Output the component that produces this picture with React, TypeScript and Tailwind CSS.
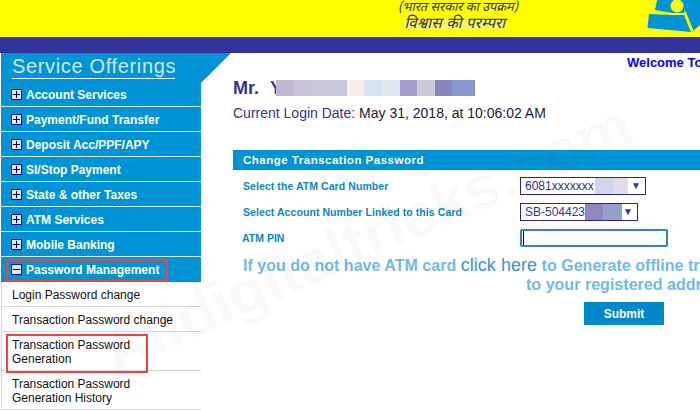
const font = { fontFamily: '"Liberation Sans", Arial, sans-serif' }

const menu = [
  'Account Services',
  'Payment/Fund Transfer',
  'Deposit Acc/PPF/APY',
  'SI/Stop Payment',
  'State & other Taxes',
  'ATM Services',
  'Mobile Banking',
]

const blurName = [
  ['w-[18px]', 'bg-[#c0b8d4]'],
  ['w-[17px]', 'bg-[#c8c2da]'],
  ['w-[36px]', 'bg-[#cac8de]'],
  ['w-[17px]', 'bg-[#f5eeea]'],
  ['w-[18px]', 'bg-[#d6e2f2]'],
  ['w-[18px]', 'bg-[#e0e6f0]'],
  ['w-[17px]', 'bg-[#a49ccc]'],
  ['w-[18px]', 'bg-[#cbc8dc]'],
  ['w-[17px]', 'bg-[#8a84bf]'],
  ['w-[23px]', 'bg-[#8898cc]'],
]

function ToggleIcon({ open = false }: { open?: boolean }) {
  return (
    <svg width="11" height="11" viewBox="0 0 11 11" className="shrink-0">
      <rect x="0.5" y="0.5" width="10" height="10" fill="#dfeaf8" stroke="#000080" />
      <path d={open ? 'M2 5.5H9' : 'M2 5.5H9M5.5 2V9'} stroke="#000080" fill="none" />
    </svg>
  )
}

function Logo() {
  return (
    <svg width="70" height="37" viewBox="0 0 70 37" className="shrink-0">
      <path d="M27 0L25 10L42 13H54L56 0Z" fill="#0093d6" />
      <path d="M52 0H70V25L62 32L55 12Z" fill="#0093d6" />
      <path d="M19 14L42 15H54L61 32L17.5 28Z" fill="#0093d6" />
      <circle cx="47" cy="6" r="6.5" fill="#ffff00" />
      <path d="M55 12L62.5 31" stroke="#ffff00" strokeWidth="2" fill="none" />
    </svg>
  )
}

export default function App() {
  return (
    <div className="relative w-[700px] h-[411px] overflow-hidden bg-white flex flex-col" style={font}>
      {/* top banner */}
      <div className="h-[37px] bg-[#ffff00] flex shrink-0 overflow-hidden">
        <div className="w-[397px] shrink-0" />
        <div className="w-[122px] shrink-0 flex flex-col items-center text-[#333] italic" style={{ fontFamily: '"Noto Sans Devanagari", "Noto Serif Devanagari", "Noto Sans", serif' }}>
          <div className="text-[12.7px] leading-[16px] whitespace-nowrap">(भारत सरकार का उपक्रम)</div>
          <div className="text-[15px] leading-[11px] mt-[3px] mr-[6px] bg-[#f4f46a] whitespace-nowrap tracking-[0.3px]">विश्वास की परम्परा</div>
        </div>
        <div className="flex-1" />
        <Logo />
      </div>
      <div className="h-[16px] bg-[#333399] shrink-0" />

      <div className="flex flex-1 min-h-0 pl-px">
        {/* left menu */}
        <aside className="relative w-[200px] shrink-0">
          <svg width="30" height="30" viewBox="0 0 30 30" className="absolute left-full top-0">
            <path d="M0 0H30L0 30Z" fill="#0093d6" />
          </svg>
          <div className="bg-[#0093d6] h-[29px] pl-[11px] pt-[2px]">
            <div className="w-[163px] border-b border-white text-[#cfeaf8] text-[20px] leading-[23px] tracking-[0.65px] whitespace-nowrap">
              Service Offerings
            </div>
          </div>
          {menu.map(m => (
            <div key={m} className="h-[25px] bg-[#0093d6] border-b border-[#d5ecf8] flex items-center gap-[4px] pl-[10px] text-white text-[12px] font-bold">
              <ToggleIcon />
              <span className="pt-[2px]">{m}</span>
            </div>
          ))}
          <div className="h-[25px] bg-[#0093d6] flex items-center gap-[4px] pl-[10px] text-white text-[12px] font-bold">
            <ToggleIcon open />
            <span className="pt-[1px]">Password Management</span>
          </div>
          <div className="border-l border-[#d8d8d8] text-[#111] text-[12px] leading-[14px]">
            <div className="h-[25px] pl-[10px] pt-[1px] flex items-center border-b border-[#d8d8d8]">Login Password change</div>
            <div className="h-[25px] pl-[10px] pt-[1px] flex items-center border-b border-[#d8d8d8]">Transaction Password change</div>
            <div className="h-[39px] pl-[10px] pt-[1px] flex items-center border-b border-[#d8d8d8]">Transaction Password<br />Generation</div>
            <div className="h-[39px] pl-[10px] pt-[1px] flex items-center border-b border-[#d8d8d8]">Transaction Password<br />Generation History</div>
          </div>
          {/* red highlight boxes */}
          <div className="absolute left-[5px] top-[206px] w-[162px] h-[23px] border-[2px] border-[#f54040]" />
          <div className="absolute left-[5px] top-[281px] w-[142px] h-[39px] border-[2px] border-[#f54040]" />
        </aside>

        {/* main content */}
        <main className="flex-1 min-w-0 overflow-hidden pl-[32px]">
          <div className="h-[27px] text-[13px] leading-[20px] font-bold text-[#0000ff] whitespace-nowrap pl-[394px]">Welcome To</div>
          <div className="flex items-center h-[16px] text-[18px] font-bold text-[#333399]">
            <span className="w-[37px] shrink-0">Mr.</span>
            <span className="w-[6px] shrink-0 overflow-hidden leading-[20px]">Y</span>
            <div className="flex h-[16px]">
              {blurName.map(([w, bg], i) => (
                <div key={i} className={`${w} ${bg}`} />
              ))}
            </div>
          </div>
          <div className="mt-[9px] text-[14px] leading-[16px] whitespace-nowrap">
            <span className="text-[#333399]">Current Login Date:</span> <span className="text-[#1a1a3a]">May 31, 2018, at 10:06:02 AM</span>
          </div>

          <div className="mt-[29px] h-[20px] bg-[#0093d6] text-white text-[11.5px] font-bold pl-[10px] pt-[1px] flex items-center tracking-[0.5px]">
            Change Transcation Password
          </div>

          <div className="mt-[7px] flex items-center h-[18px]">
            <div className="w-[287px] pl-[10px] pt-[2px] text-[10.5px] font-bold text-[#0a85cc] tracking-[0.07px]">Select the ATM Card Number</div>
            <div className="w-[126px] h-[18px] border border-[#27278f] flex items-center pl-[4px] text-[12px] text-[#333399] relative">
              6081xxxxxxx
              <div className="absolute left-[74px] top-0 h-[16px] w-[18px] bg-[#d3d5ea]" />
              <div className="absolute left-[92px] top-0 h-[16px] w-[15px] bg-[#e0dcec]" />
              <span className="absolute right-[4px] top-[2px] text-[10px] leading-[12px]">▼</span>
            </div>
          </div>
          <div className="mt-[8px] flex items-center h-[18px]">
            <div className="w-[287px] pl-[10px] pt-[2px] text-[10.5px] font-bold text-[#0a85cc] tracking-[0.07px]">Select Account Number Linked to this Card</div>
            <div className="w-[118px] h-[18px] border border-[#27278f] flex items-center pl-[4px] text-[12px] text-[#333399] relative">
              SB-504423
              <div className="absolute left-[64px] top-0 h-[16px] w-[18px] bg-[#8f88bd]" />
              <div className="absolute left-[82px] top-0 h-[16px] w-[19px] bg-[#959fcd]" />
              <span className="absolute right-[4px] top-[2px] text-[10px] leading-[12px]">▼</span>
            </div>
          </div>
          <div className="mt-[8px] flex items-center h-[18px]">
            <div className="w-[287px] pl-[9px] pt-[2px] text-[10.5px] font-bold text-[#0a85cc]">ATM PIN</div>
            <div className="w-[148px] h-[18px] border-2 border-[#2f7fe0] rounded-[2px] flex items-center">
              <span className="w-px h-[14px] bg-black ml-px" />
            </div>
          </div>

          <div className="mt-[9px] text-[16px] leading-[19px] font-bold text-[#70b8ee] whitespace-nowrap pl-[10px] tracking-[0.03px]">
            <div>
              If you do not have ATM card <span className="font-normal text-[18px] leading-none text-[#3c92dc]">click here</span> to Generate offline transaction
            </div>
            <div className="pl-[283px]">to your registered address</div>
          </div>

          <div className="mt-[8px] ml-[351px] w-[80px] h-[23px] bg-[#0088c8] text-white text-[12px] font-bold flex items-center justify-center">
            Submit
          </div>
        </main>
      </div>

      {/* site watermark */}
      <div className="absolute left-[80px] top-[185px] w-[600px] text-[62px] font-bold text-black/[0.025] whitespace-nowrap -rotate-[24deg] pointer-events-none select-none">
        Alldigitaltricks.com
      </div>
    </div>
  )
}
